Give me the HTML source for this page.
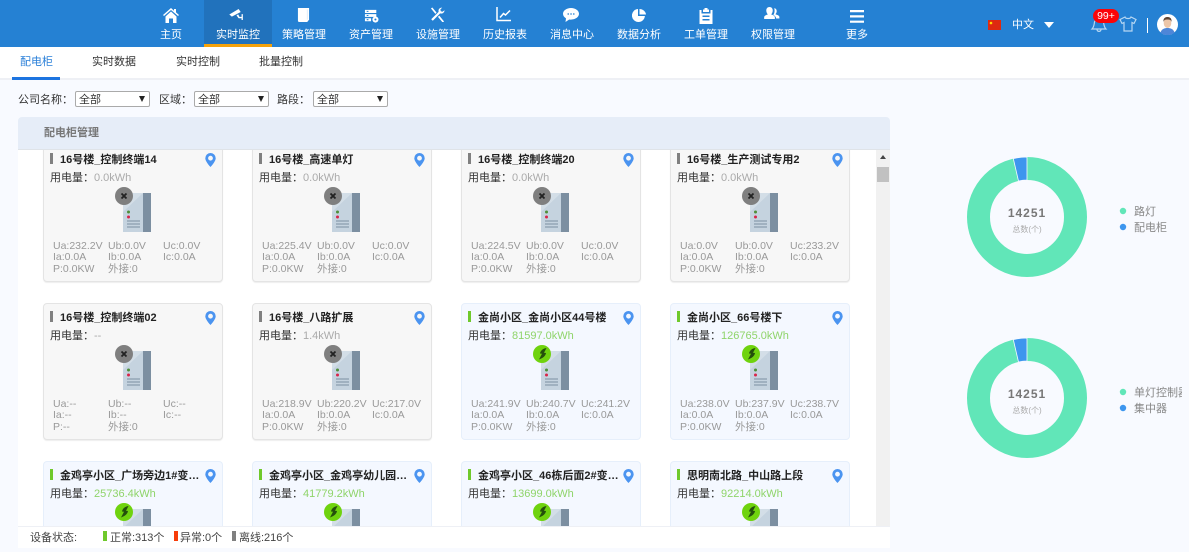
<!DOCTYPE html>
<html lang="zh"><head><meta charset="utf-8"><title>配电柜</title>
<style>
*{box-sizing:border-box}
html,body{margin:0;padding:0;width:1189px;height:552px;overflow:hidden;background:#f8faff;font-family:"Liberation Sans","Noto Sans CJK SC",sans-serif;font-size:11px;color:#333}
.a{position:absolute;white-space:nowrap}
#nav{left:0;top:0;width:1189px;height:47px;background:#2581d3}
.ni{position:absolute;top:29px;width:66px;margin-left:-33px;text-align:center;color:#fff;font-size:11px;line-height:13px}
.ic{position:absolute;fill:#fff}
.sel{position:absolute;top:91px;width:75px;height:16px;background:#fff;border:1px solid #aaa;border-radius:2px;font-size:11px;line-height:16px;padding-left:3px;color:#333}
.sel i{position:absolute;right:4px;top:4px;width:0;height:0;border-left:3.5px solid transparent;border-right:3.5px solid transparent;border-top:6px solid #222}
.lab{top:93px;line-height:14px;color:#333}
.tab{top:55px;line-height:14px;color:#333}
#list{left:18px;top:150px;width:858px;height:376px;overflow:hidden;background:#fff}
.c{position:absolute;width:180px;height:137px;border-radius:4px;border:1px solid #e4e4e4;background:#f7f7f7;box-shadow:0 1px 1px #eee;overflow:hidden}
.c.on{border-color:#e6effb;background:#f4f8ff;box-shadow:none}
.c.r3{height:65px;border-bottom:0;border-radius:4px 4px 0 0}
.c .m{position:absolute;left:6px;top:7px;width:3px;height:11px;background:#808080}
.c.on .m{background:#6fc92c}
.c .t{position:absolute;left:16px;top:7px;width:140px;line-height:14px;font-weight:bold;color:#222;white-space:nowrap;overflow:hidden}
.c .u{position:absolute;left:6px;top:25px;line-height:14px;white-space:nowrap;color:#333}
.c .u b{font-weight:normal;color:#aaa}
.c.on .u b{color:#8fd46a}
.c .dv{position:absolute;left:69px;top:36px;width:40px;height:50px}
.c span{position:absolute;font-size:10.5px;line-height:11px;color:#999;white-space:nowrap}
.c svg.p{position:absolute;left:161px;top:7px;width:11px;height:14px}
.x1{left:9px}.x2{left:64px}.x3{left:119px}
.y1{top:95px}.y2{top:106px}.y3{top:118px}
</style></head><body>
<svg width="0" height="0" style="position:absolute"><defs>
<symbol id="pin" viewBox="0 0 11 14"><path d="M5.5 0A5.2 5.2 0 0 0 .3 5.2C.3 8.6 5.5 14 5.5 14s5.2-5.4 5.2-8.8A5.2 5.2 0 0 0 5.5 0zm0 7.6a2.4 2.4 0 1 1 0-4.8 2.4 2.4 0 0 1 0 4.8z" fill="#4b94f0"/></symbol>
<symbol id="dev" viewBox="0 0 40 50"><rect x="10" y="11" width="28" height="39" fill="#c5d3df"/><rect x="30" y="11" width="8" height="39" fill="#7c8fa1"/><path d="M10 11h20L10 30z" fill="#d3dee7"/><circle cx="15.500" cy="30" r="1.500" fill="#4f8f3a"/><circle cx="15.500" cy="35" r="1.500" fill="#d8264a"/><path d="M14 39h13M14 42h13M14 45h13" stroke="#7c8fa1" stroke-width="1"/></symbol>
<symbol id="off" viewBox="0 0 40 50"><use href="#dev" width="40" height="50"/><circle cx="11" cy="14" r="9" fill="#7f7f7f"/><path d="M8.500 11.500l5 5M13.500 11.500l-5 5" stroke="#222" stroke-width="1.800"/></symbol>
<symbol id="onl" viewBox="0 0 40 50"><use href="#dev" width="40" height="50"/><circle cx="11" cy="14" r="9" fill="#6fd30e"/><path d="M15.500 8c-3.500.5-6 2.500-6.500 5.500l2 .2-3 5.800c4-1.500 6.500-3.500 7-6.500l-2-.2z" fill="#24500c"/></symbol>
</defs></svg>

<div id="nav" class="a">
<div class="a" style="left:204px;top:0;width:68px;height:47px;background:#2172bc;border-bottom:3px solid #f5a20a"></div>
<svg class="ic" style="left:163px;top:8px" width="16" height="15" viewBox="0 0 16 15"><path d="M8 0L0 7l1 1 7-6 7 6 1-1-3-2.600V1h-2v1.700zM2.500 8.500V15H6v-4.500h4V15h3.500V8.500L8 3.500z"/></svg>
<svg class="ic" style="left:229px;top:9px" width="15" height="11" viewBox="0 0 17 13"><path d="M0 6.500L11 0l2.500 3.500L3 9zM8.500 7.500l2-1.200 1.500 3h2.500V6H16v7h-1.500v-2H11z"/></svg>
<svg class="ic" style="left:297px;top:8px" width="13" height="14" viewBox="0 0 14 15"><path d="M1 0h12v12.500L11 15H2.500A1.500 1.500 0 0 1 1 13.500z"/><path d="M11 1.500v11" stroke="#cfe3f6" stroke-width=".7"/></svg>
<svg class="ic" style="left:364px;top:9px" width="15" height="14" viewBox="0 0 17 16"><path d="M1 1h13v3.500H1zM1 5.800h13V9H1zM1 10.500h7V14H1z"/><circle cx="13" cy="12" r="3.500"/><path d="M3 2.700h2M3 7.400h2M3 12.200h2" stroke="#2581d3" stroke-width="1.200"/><circle cx="13" cy="12" r="1.200" fill="#2581d3"/></svg>
<svg class="ic" style="left:430px;top:7px" width="15" height="15" viewBox="0 0 16 16"><path d="M1 1.500L2.500.5l4.500 5.500-1.300 1.300zM15 15.500l-1.500 1-5-6 1.400-1.300zM15.500 3.500a3.500 3.500 0 0 1-4.700 3.300L3 14.700 1.300 13 9.200 5.200A3.500 3.500 0 0 1 13 .7l-2 2 .5 1.800 1.800.5z"/></svg>
<svg style="position:absolute;left:496px;top:7px" width="15" height="15" viewBox="0 0 15 15" fill="none" stroke="#fff"><path d="M1 0v13.500h14" stroke-width="1.500"/><path d="M4 10.500l3.500-4 2 1.500L14 3.500" stroke-width="1.500"/></svg>
<svg class="ic" style="left:563px;top:8px" width="16" height="14" viewBox="0 0 16 14"><path d="M8 0C3.600 0 0 2.600 0 5.800c0 1.900 1.200 3.500 3 4.600L2.500 14l3.700-2.500c.6.100 1.200.1 1.800.1 4.400 0 8-2.600 8-5.800S12.400 0 8 0z"/><path d="M4.500 6h1.500M7.300 6h1.500M10 6h1.500" stroke="#2581d3" stroke-width="1.300"/></svg>
<svg class="ic" style="left:632px;top:9px" width="14" height="13" viewBox="0 0 14 13"><path d="M6 0a6.500 6.500 0 1 0 6.900 7H6z"/><path d="M7.500 0v5.500H14A6.500 6.500 0 0 0 7.500 0z"/></svg>
<svg class="ic" style="left:699px;top:8px" width="14" height="16" viewBox="0 0 14 16"><path d="M4 1.500h1.500V0h3v1.500H10V4H4zM2.500 2H.5v14h13V2h-2v3.500h-9zM3.500 7.500h7v1.500h-7zM3.500 11h7v1.500h-7z" fill-rule="evenodd"/></svg>
<svg class="ic" style="left:764px;top:7px" width="16" height="12" viewBox="0 0 17 13"><path d="M0 13v-2c0-1.500 2.700-2.500 4-3-1-1-1.700-2.500-1.700-4.200C2.300 1.500 3.700 0 5.800 0s3.500 1.500 3.500 3.800c0 1.700-.7 3.200-1.700 4.200 1.300.5 4 1.500 4 3v2zM11 1.200c1.500.2 2.600 1.500 2.600 3.300 0 1.300-.6 2.500-1.400 3.300 1.800.6 4.300 1.500 4.300 2.900V12.500h-3.500c0-1.500-1.300-3-3-4 .8-1.200 1.300-2.700 1.300-4.300 0-1.200-.2-2.200-.3-3z"/></svg>
<svg class="ic" style="left:850px;top:10px" width="14" height="13" viewBox="0 0 14 13"><path d="M0 0h14v2.200H0zM0 5.300h14v2.200H0zM0 10.600h14v2.200H0z"/></svg>
<div class="ni" style="left:171px">主页</div>
<div class="ni" style="left:238px">实时监控</div>
<div class="ni" style="left:304px">策略管理</div>
<div class="ni" style="left:371px">资产管理</div>
<div class="ni" style="left:438px">设施管理</div>
<div class="ni" style="left:505px">历史报表</div>
<div class="ni" style="left:572px">消息中心</div>
<div class="ni" style="left:639px">数据分析</div>
<div class="ni" style="left:706px">工单管理</div>
<div class="ni" style="left:773px">权限管理</div>
<div class="ni" style="left:857px">更多</div>
<svg style="position:absolute;left:988px;top:20px" width="13" height="10" viewBox="0 0 13 10"><rect width="13" height="10" fill="#de2910"/><circle cx="3" cy="3" r="1.300" fill="#ffde00"/></svg>
<div class="a" style="left:1012px;top:19px;color:#fff;line-height:13px">中文</div>
<div class="a" style="left:1044px;top:22px;width:0;height:0;border-left:5px solid transparent;border-right:5px solid transparent;border-top:6px solid #fff"></div>
<svg style="position:absolute;left:1090px;top:16px" width="18" height="17" viewBox="0 0 18 17" fill="none" stroke="#b7d7f2" stroke-width="1.200"><path d="M2 13c2-2 2-4 2.500-7C5 3.500 7 2 9 2s4 1.500 4.500 4c.5 3 .5 5 2.500 7zM7 13.500c.3 2.500 3.700 2.500 4 0"/></svg>
<div class="a" style="left:1093px;top:9px;width:26px;height:14px;border-radius:7px;background:#fb0408;color:#fff;font-size:10.500px;line-height:14px;text-align:center">99+</div>
<svg style="position:absolute;left:1119px;top:16px" width="18" height="16" viewBox="0 0 18 16" fill="none" stroke="#b7d7f2" stroke-width="1.200"><path d="M6 1L1 3.500l2 4 2-1V15h8V6.500l2 1 2-4L12 1c-.5 2-5.500 2-6 0z"/></svg>
<div class="a" style="left:1147px;top:18px;width:1px;height:15px;background:#fff"></div>
<svg style="position:absolute;left:1157px;top:14px" width="21" height="21" viewBox="0 0 21 21"><circle cx="10.500" cy="10.500" r="10.500" fill="#fff"/><path d="M3.500 18.500c1-3.500 4-4.500 7-4.500s6 1 7 4.500a10.500 10.500 0 0 1-14 0z" fill="#4e86d8"/><ellipse cx="10.500" cy="9" rx="3.800" ry="5" fill="#edc6a8"/><path d="M6.500 8c-.5-4 2-5 4-5s4.500 1 4 5c-.5-2-1.500-2.500-4-2.500S7 6 6.500 8z" fill="#5c4435"/></svg>
</div>

<div class="a" style="left:0;top:47px;width:1189px;height:33px;background:#fff;border-bottom:2px solid #eef0f5"></div>
<div class="a tab" style="left:20px;color:#2a7fd8">配电柜</div>
<div class="a" style="left:12px;top:77px;width:48px;height:3px;background:#1d74e0"></div>
<div class="a tab" style="left:92px">实时数据</div>
<div class="a tab" style="left:176px">实时控制</div>
<div class="a tab" style="left:259px">批量控制</div>

<div class="a lab" style="left:18px">公司名称：</div>
<div class="sel" style="left:75px">全部<i></i></div>
<div class="a lab" style="left:159px">区域：</div>
<div class="sel" style="left:194px">全部<i></i></div>
<div class="a lab" style="left:277px">路段：</div>
<div class="sel" style="left:313px">全部<i></i></div>

<div class="a" style="left:18px;top:117px;width:872px;height:33px;background:#e6edf8;border-radius:4px 4px 0 0;border-bottom:1px solid #dfe3e8"></div>
<div class="a" style="left:44px;top:126px;line-height:14px;font-weight:bold;color:#777">配电柜管理</div>

<div id="list" class="a">
<!-- row 1 -->
<div class="c" style="left:25px;top:-5px"><div class="m"></div><div class="t">16号楼_控制终端14</div><svg class="p"><use href="#pin"/></svg><div class="u">用电量：<b>0.0kWh</b></div><svg class="dv"><use href="#off"/></svg><span class="x1 y1">Ua:232.2V</span><span class="x2 y1">Ub:0.0V</span><span class="x3 y1">Uc:0.0V</span><span class="x1 y2">Ia:0.0A</span><span class="x2 y2">Ib:0.0A</span><span class="x3 y2">Ic:0.0A</span><span class="x1 y3">P:0.0KW</span><span class="x2 y3">外接:0</span></div>
<div class="c" style="left:234px;top:-5px"><div class="m"></div><div class="t">16号楼_高速单灯</div><svg class="p"><use href="#pin"/></svg><div class="u">用电量：<b>0.0kWh</b></div><svg class="dv"><use href="#off"/></svg><span class="x1 y1">Ua:225.4V</span><span class="x2 y1">Ub:0.0V</span><span class="x3 y1">Uc:0.0V</span><span class="x1 y2">Ia:0.0A</span><span class="x2 y2">Ib:0.0A</span><span class="x3 y2">Ic:0.0A</span><span class="x1 y3">P:0.0KW</span><span class="x2 y3">外接:0</span></div>
<div class="c" style="left:443px;top:-5px"><div class="m"></div><div class="t">16号楼_控制终端20</div><svg class="p"><use href="#pin"/></svg><div class="u">用电量：<b>0.0kWh</b></div><svg class="dv"><use href="#off"/></svg><span class="x1 y1">Ua:224.5V</span><span class="x2 y1">Ub:0.0V</span><span class="x3 y1">Uc:0.0V</span><span class="x1 y2">Ia:0.0A</span><span class="x2 y2">Ib:0.0A</span><span class="x3 y2">Ic:0.0A</span><span class="x1 y3">P:0.0KW</span><span class="x2 y3">外接:0</span></div>
<div class="c" style="left:652px;top:-5px"><div class="m"></div><div class="t">16号楼_生产测试专用2</div><svg class="p"><use href="#pin"/></svg><div class="u">用电量：<b>0.0kWh</b></div><svg class="dv"><use href="#off"/></svg><span class="x1 y1">Ua:0.0V</span><span class="x2 y1">Ub:0.0V</span><span class="x3 y1">Uc:233.2V</span><span class="x1 y2">Ia:0.0A</span><span class="x2 y2">Ib:0.0A</span><span class="x3 y2">Ic:0.0A</span><span class="x1 y3">P:0.0KW</span><span class="x2 y3">外接:0</span></div>
<!-- row 2 -->
<div class="c" style="left:25px;top:153px"><div class="m"></div><div class="t">16号楼_控制终端02</div><svg class="p"><use href="#pin"/></svg><div class="u">用电量：<b>--</b></div><svg class="dv"><use href="#off"/></svg><span class="x1 y1">Ua:--</span><span class="x2 y1">Ub:--</span><span class="x3 y1">Uc:--</span><span class="x1 y2">Ia:--</span><span class="x2 y2">Ib:--</span><span class="x3 y2">Ic:--</span><span class="x1 y3">P:--</span><span class="x2 y3">外接:0</span></div>
<div class="c" style="left:234px;top:153px"><div class="m"></div><div class="t">16号楼_八路扩展</div><svg class="p"><use href="#pin"/></svg><div class="u">用电量：<b>1.4kWh</b></div><svg class="dv"><use href="#off"/></svg><span class="x1 y1">Ua:218.9V</span><span class="x2 y1">Ub:220.2V</span><span class="x3 y1">Uc:217.0V</span><span class="x1 y2">Ia:0.0A</span><span class="x2 y2">Ib:0.0A</span><span class="x3 y2">Ic:0.0A</span><span class="x1 y3">P:0.0KW</span><span class="x2 y3">外接:0</span></div>
<div class="c on" style="left:443px;top:153px"><div class="m"></div><div class="t">金尚小区_金尚小区44号楼</div><svg class="p"><use href="#pin"/></svg><div class="u">用电量：<b>81597.0kWh</b></div><svg class="dv"><use href="#onl"/></svg><span class="x1 y1">Ua:241.9V</span><span class="x2 y1">Ub:240.7V</span><span class="x3 y1">Uc:241.2V</span><span class="x1 y2">Ia:0.0A</span><span class="x2 y2">Ib:0.0A</span><span class="x3 y2">Ic:0.0A</span><span class="x1 y3">P:0.0KW</span><span class="x2 y3">外接:0</span></div>
<div class="c on" style="left:652px;top:153px"><div class="m"></div><div class="t">金尚小区_66号楼下</div><svg class="p"><use href="#pin"/></svg><div class="u">用电量：<b>126765.0kWh</b></div><svg class="dv"><use href="#onl"/></svg><span class="x1 y1">Ua:238.0V</span><span class="x2 y1">Ub:237.9V</span><span class="x3 y1">Uc:238.7V</span><span class="x1 y2">Ia:0.0A</span><span class="x2 y2">Ib:0.0A</span><span class="x3 y2">Ic:0.0A</span><span class="x1 y3">P:0.0KW</span><span class="x2 y3">外接:0</span></div>
<!-- row 3 -->
<div class="c on r3" style="left:25px;top:311px"><div class="m"></div><div class="t">金鸡亭小区_广场旁边1#变…</div><svg class="p"><use href="#pin"/></svg><div class="u">用电量：<b>25736.4kWh</b></div><svg class="dv"><use href="#onl"/></svg></div>
<div class="c on r3" style="left:234px;top:311px"><div class="m"></div><div class="t">金鸡亭小区_金鸡亭幼儿园…</div><svg class="p"><use href="#pin"/></svg><div class="u">用电量：<b>41779.2kWh</b></div><svg class="dv"><use href="#onl"/></svg></div>
<div class="c on r3" style="left:443px;top:311px"><div class="m"></div><div class="t">金鸡亭小区_46栋后面2#变…</div><svg class="p"><use href="#pin"/></svg><div class="u">用电量：<b>13699.0kWh</b></div><svg class="dv"><use href="#onl"/></svg></div>
<div class="c on r3" style="left:652px;top:311px"><div class="m"></div><div class="t">思明南北路_中山路上段</div><svg class="p"><use href="#pin"/></svg><div class="u">用电量：<b>92214.0kWh</b></div><svg class="dv"><use href="#onl"/></svg></div>
</div>

<div class="a" style="left:876px;top:150px;width:14px;height:376px;background:#f1f1f1"></div>
<div class="a" style="left:880px;top:155px;width:0;height:0;border-left:3.500px solid transparent;border-right:3.500px solid transparent;border-bottom:4px solid #444"></div>
<div class="a" style="left:877px;top:167px;width:12px;height:15px;background:#c1c1c1"></div>

<div class="a" style="left:18px;top:526px;width:872px;height:22px;background:#fff;border-top:1px solid #eef0f5"></div>
<div class="a" style="left:30px;top:531px;line-height:14px;color:#444">设备状态:</div>
<div class="a" style="left:103px;top:531px;width:4px;height:10px;background:#6fc92c"></div>
<div class="a" style="left:110px;top:531px;line-height:14px;color:#444">正常:313个</div>
<div class="a" style="left:174px;top:531px;width:4px;height:10px;background:#f73c0a"></div>
<div class="a" style="left:180px;top:531px;line-height:14px;color:#444">异常:0个</div>
<div class="a" style="left:232px;top:531px;width:4px;height:10px;background:#808080"></div>
<div class="a" style="left:239px;top:531px;line-height:14px;color:#444">离线:216个</div>

<svg style="position:absolute;left:960px;top:150px" width="229" height="320" viewBox="0 0 229 320" font-family="Liberation Sans, Noto Sans CJK SC, sans-serif">
<circle cx="67" cy="67" r="48.500" fill="none" stroke="#61e6b8" stroke-width="23"/>
<path d="M67 7A60 60 0 0 0 53.300 8.600L58.500 31A37 37 0 0 1 67 30Z" fill="#3d96ee" stroke="#f8faff" stroke-width=".8"/>
<text x="67" y="67" text-anchor="middle" font-size="12" font-weight="bold" fill="#777" letter-spacing="1">14251</text>
<text x="67" y="82" text-anchor="middle" font-size="8" fill="#aaa">总数(个)</text>
<circle cx="163" cy="61" r="3.200" fill="#61e6b8"/>
<text x="174" y="65" font-size="11" fill="#888">路灯</text>
<circle cx="163" cy="77" r="3.200" fill="#3d96ee"/>
<text x="174" y="81" font-size="11" fill="#888">配电柜</text>
<circle cx="67" cy="248" r="48.500" fill="none" stroke="#61e6b8" stroke-width="23"/>
<path d="M67 188A60 60 0 0 0 53.300 189.600L58.500 212A37 37 0 0 1 67 211Z" fill="#3d96ee" stroke="#f8faff" stroke-width=".8"/>
<text x="67" y="248" text-anchor="middle" font-size="12" font-weight="bold" fill="#777" letter-spacing="1">14251</text>
<text x="67" y="263" text-anchor="middle" font-size="8" fill="#aaa">总数(个)</text>
<circle cx="163" cy="242" r="3.200" fill="#61e6b8"/>
<text x="174" y="246" font-size="11" fill="#888">单灯控制器</text>
<circle cx="163" cy="258" r="3.200" fill="#3d96ee"/>
<text x="174" y="262" font-size="11" fill="#888">集中器</text>
</svg>
<div class="a" style="left:1182px;top:380px;width:7px;height:24px;background:#f8faff"></div>
</body></html>
